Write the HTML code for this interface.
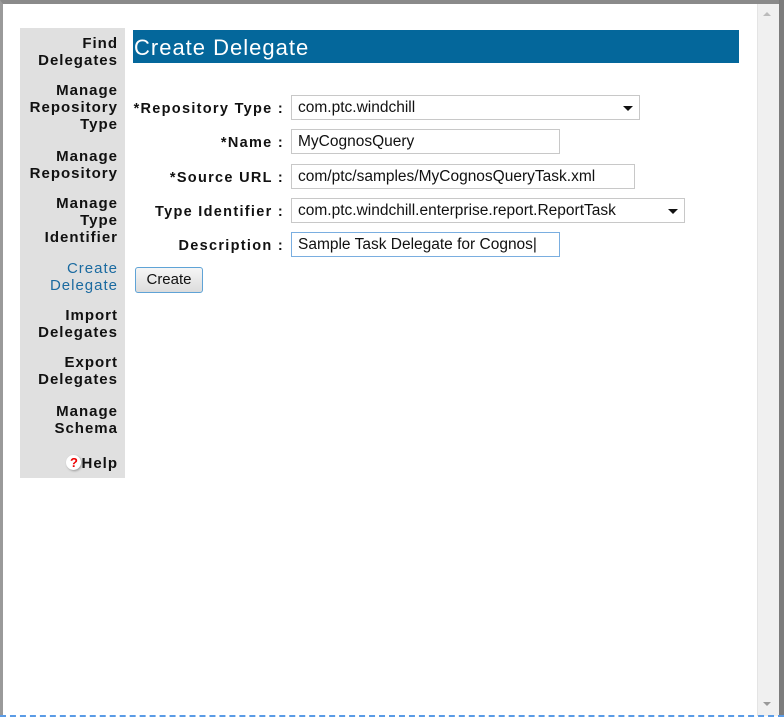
<!DOCTYPE html>
<html><head><style>
body{margin:0;width:784px;height:720px;overflow:hidden;background:#fff;position:relative;font-family:"Liberation Sans",sans-serif;}
.frame{position:absolute;left:0;top:0;width:780px;height:716px;border-top:4px solid #8a8a8a;border-left:3px solid #9a9a9a;box-sizing:border-box}
.rb{position:absolute;right:0;top:0;width:5px;height:716px;background:#7c7c7c}
.sb{position:absolute;left:757px;top:4px;width:22px;height:712px;background:#f0f0f0;border-left:1px solid #e4e4e4}
.dash{position:absolute;left:0;top:715px;width:784px;height:0;border-top:2px dashed #5a9be6}
.side{position:absolute;left:20px;top:28px;width:105px;height:450px;background:#e0e0e0}
.si{position:absolute;right:7px;text-align:right;font-weight:bold;font-size:15px;line-height:17px;color:#111;letter-spacing:1px}
.hdr{position:absolute;left:133px;top:30px;width:605px;height:33px;background:#04679b;color:#fff;font-size:22px;line-height:35px;padding-left:1px;letter-spacing:1px}
.lbl{position:absolute;right:500px;font-weight:bold;font-size:14.5px;color:#111;letter-spacing:1.3px}
.in{position:absolute;left:291px;height:25px;border:1px solid #c8c8c8;box-sizing:border-box;font-size:15.5px;line-height:24px;padding-left:6px;color:#111;background:#fff}
.arr{position:absolute;right:6px;top:10px;width:0;height:0;border-left:5px solid transparent;border-right:5px solid transparent;border-top:5px solid #111}
</style></head><body>
<div class="frame"></div><div class="sb"></div><div class="rb"></div><div class="dash"></div>
<div style="position:absolute;left:763px;top:12px;border-left:4px solid transparent;border-right:4px solid transparent;border-bottom:4px solid #bbb"></div>
<div style="position:absolute;left:763px;top:702px;border-left:4px solid transparent;border-right:4px solid transparent;border-top:4px solid #999"></div>
<div class="side">
<div class="si" style="top:7px">Find<br>Delegates</div>
<div class="si" style="top:54px">Manage<br>Repository<br>Type</div>
<div class="si" style="top:120px">Manage<br>Repository</div>
<div class="si" style="top:167px">Manage<br>Type<br>Identifier</div>
<div class="si" style="top:232px;color:#1a6aa0;font-weight:normal">Create<br>Delegate</div>
<div class="si" style="top:279px">Import<br>Delegates</div>
<div class="si" style="top:326px">Export<br>Delegates</div>
<div class="si" style="top:375px">Manage<br>Schema</div>
<div class="si" style="top:427px"><span style="display:inline-block;width:15px;height:15px;border-radius:50%;background:#fff;color:#e00;font-size:13px;line-height:15px;text-align:center;vertical-align:1px;box-shadow:1px 1px 2px #999;letter-spacing:0">?</span>Help</div>
</div>
<div class="hdr">Create Delegate</div>
<div class="lbl" style="top:101px">*Repository Type :</div>
<div class="lbl" style="top:135px">*Name :</div>
<div class="lbl" style="top:170px">*Source URL :</div>
<div class="lbl" style="top:204px">Type Identifier :</div>
<div class="lbl" style="top:238px">Description :</div>
<div class="in" style="top:95px;width:349px">com.ptc.windchill<div class="arr"></div></div>
<div class="in" style="top:129px;width:269px">MyCognosQuery</div>
<div class="in" style="top:164px;width:344px">com/ptc/samples/MyCognosQueryTask.xml</div>
<div class="in" style="top:198px;width:394px">com.ptc.windchill.enterprise.report.ReportTask<div class="arr"></div></div>
<div class="in" style="top:232px;width:269px;border-color:#7aaee0">Sample Task Delegate for Cognos|</div>
<div style="position:absolute;left:135px;top:267px;width:68px;height:26px;box-sizing:border-box;border:1px solid #5fa3d6;border-radius:3px;background:linear-gradient(#f6f6f6,#dcdcdc);font-size:15px;text-align:center;line-height:24px;color:#111">Create</div>
</body></html>
